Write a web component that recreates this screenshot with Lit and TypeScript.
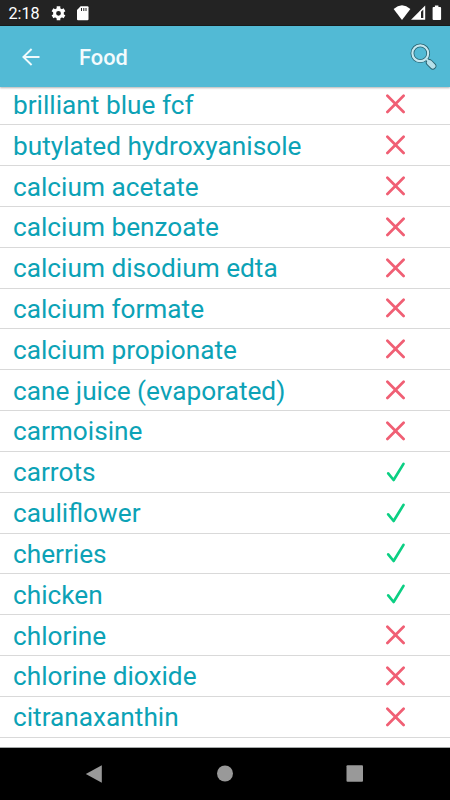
import { LitElement, html, css, svg } from "lit";
import { customElement, property } from "lit/decorators.js";

type Food = { name: string; ok: boolean };

const foods: Food[] = [
  { name: "brilliant blue fcf", ok: false },
  { name: "butylated hydroxyanisole", ok: false },
  { name: "calcium acetate", ok: false },
  { name: "calcium benzoate", ok: false },
  { name: "calcium disodium edta", ok: false },
  { name: "calcium formate", ok: false },
  { name: "calcium propionate", ok: false },
  { name: "cane juice (evaporated)", ok: false },
  { name: "carmoisine", ok: false },
  { name: "carrots", ok: true },
  { name: "cauliflower", ok: true },
  { name: "cherries", ok: true },
  { name: "chicken", ok: true },
  { name: "chlorine", ok: false },
  { name: "chlorine dioxide", ok: false },
  { name: "citranaxanthin", ok: false },
];

@customElement("food-row")
export class FoodRow extends LitElement {
  @property({ attribute: false }) food!: Food;

  static styles = css`
    :host {
      display: flex;
      align-items: center;
      justify-content: space-between;
      box-sizing: border-box;
      flex: none;
      height: 40.84px;
      padding: 0 44px 0 13px;
      border-bottom: 1px solid #d9d9d9;
      color: #0ca2b6;
      font-size: 26.22px;
      line-height: 30px;
      white-space: nowrap;
    }
    .name { padding-top: 1.1px; }
    .mark {
      width: 20px;
      height: 20px;
      fill: none;
      stroke-width: 2.7;
      stroke-linecap: round;
      stroke-linejoin: round;
    }
    .no { stroke: #f05f74; }
    .yes { stroke: #0bcf83; }
  `;

  render() {
    return html`<span class="name">${this.food.name}</span>
      <svg class="mark ${this.food.ok ? "yes" : "no"}" viewBox="0 0 20 20">
        ${this.food.ok
          ? svg`<path d="M2.2 11.4L7.6 18L17.5 1.9" />`
          : svg`<path d="M1.4 1.8L17.6 18M17.6 1.8L1.4 18" />`}
      </svg>`;
  }
}

@customElement("app-root")
export class AppRoot extends LitElement {
  static styles = css`
    :host {
      display: flex;
      flex-direction: column;
      width: 450px;
      height: 800px;
      overflow: hidden;
      background: #fff;
      font-family: Roboto, sans-serif;
    }
    svg { display: block; flex: none; }
    .status {
      display: flex;
      align-items: center;
      justify-content: space-between;
      box-sizing: border-box;
      flex: none;
      height: 26px;
      padding-left: 8.5px;
      background: #232323;
      border-bottom: 1px solid #181c1d;
      color: #fff;
    }
    .group { display: flex; align-items: center; }
    .time { box-sizing: border-box; width: 42.5px; height: 26px; padding-top: 1px; font-size: 16.2px; line-height: 26px; }
    .bar {
      display: flex;
      align-items: center;
      flex: none;
      z-index: 1;
      height: 61px;
      background: #52bad5;
      box-shadow: 0 1px 2px rgba(0, 0, 0, 0.3);
      color: #f4fbfd;
    }
    .back { margin-left: 21px; }
    .title { flex: 1; margin-left: 39px; padding-top: 3px; font-size: 21.8px; font-weight: 500; line-height: 26px; }
    .search { margin-right: 12px; }
    .list {
      display: flex;
      flex: 1;
      min-height: 0;
      flex-direction: column;
      overflow: hidden;
    }
    .first { margin-top: -2.6px; }
    .nav {
      display: flex;
      align-items: center;
      justify-content: space-between;
      box-sizing: border-box;
      flex: none;
      height: 53px;
      padding: 0 86px 1px 85px;
      border-top: 1px solid #a5a9a9;
      background: #000;
    }
  `;

  render() {
    return html`
      <div class="status">
        <div class="group">
          <span class="time">2:18</span>
          <svg width="16" height="26" viewBox="0 0 16 26">
            <g fill="none" stroke="#fff">
              <circle cx="7.5" cy="13.3" r="3.9" stroke-width="3" />
              <path stroke-width="3.6" d="M7.5 9V6.3M7.5 17.6V20.3M3.8 11.1L1.5 9.8M11.2 15.5L13.5 16.8M3.8 15.5L1.5 16.8M11.2 11.1L13.5 9.8" />
            </g>
          </svg>
          <svg width="30" height="26" viewBox="0 0 30 26">
            <path fill="#fff" d="M13.6 6.3h6.9q1 0 1 1v11.9q0 1-1 1H11q-1 0-1-1V10z" />
            <path stroke="#232323" stroke-width="1" d="M14.5 8v3M16.8 8v3M19 8v3" />
          </svg>
        </div>
        <svg width="60" height="26" viewBox="0 0 60 26">
          <path fill="#fff" d="M3.6 8.9Q12 1.7 20.4 8.9L12 20z" />
          <path fill="#fff" d="M21 19.8L35.2 5.6v14.2z" />
          <path fill="#232323" d="M31 11.8l2.3-2.3v8.6H31z" />
          <path fill="#fff" d="M43.5 7h1.4V5.6h3.5V7h1.8q.9 0 .9.9V19q0 .9-.9.9h-6.7q-.9 0-.9-.9V7.9q0-.9.9-.9z" />
        </svg>
      </div>
      <div class="bar">
        <svg class="back" width="19" height="18" viewBox="0 0 19 18" fill="none" stroke="#f0fafc" stroke-width="1.9">
          <path d="M18.5 9H2.5M10.6 1L2.4 9L10.6 17" />
        </svg>
        <span class="title">Food</span>
        <svg class="search" width="28" height="28" viewBox="0 0 28 28" fill="none">
          <path stroke="#27616f" stroke-width="7" stroke-linecap="round" d="M19.4 19.6L22.8 23" />
          <path stroke="#27616f" stroke-width="3.6" d="M15.5 15L19 18.5" />
          <circle cx="10.3" cy="10.3" r="7.9" stroke="#27616f" stroke-width="3.8" />
          <circle cx="10.3" cy="10.3" r="7.9" stroke="#c5e8f0" stroke-width="2.2" />
          <path stroke="#b5e0ea" stroke-width="1.8" d="M15.8 15.5L19 18.5" />
          <path stroke="#b5e0ea" stroke-width="5.3" stroke-linecap="round" d="M19.5 19.7L22.8 23" />
        </svg>
      </div>
      <div class="list">
        ${foods.map((f, i) => html`<food-row class=${i ? "" : "first"} .food=${f}></food-row>`)}
      </div>
      <div class="nav">
        <svg width="18" height="18" viewBox="0 0 18 18"><path fill="#999" d="M.8 9L16.8.2V17.8z" /></svg>
        <svg width="17" height="17" viewBox="0 0 17 17"><circle cx="9" cy="8.5" r="8" fill="#999" /></svg>
        <svg width="18" height="17" viewBox="0 0 18 17"><rect x=".5" y=".3" width="16.5" height="16.5" rx="1" fill="#999" /></svg>
      </div>
    `;
  }
}
